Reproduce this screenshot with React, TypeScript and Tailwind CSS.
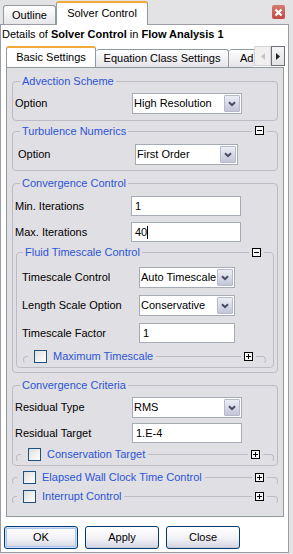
import type { ReactNode } from 'react'

const face = 'bg-[#e0dfe3]'

function PlusMinus({ minus }: { minus?: boolean }) {
  return (
    <span className="relative block w-[9px] h-[9px] border border-black bg-[#f7f7f7]">
      <span className="absolute left-[1px] top-[3px] w-[5px] h-px bg-black" />
      {!minus && <span className="absolute left-[3px] top-[1px] w-px h-[5px] bg-black" />}
    </span>
  )
}

function Checkbox() {
  return (
    <span className="block w-[13px] h-[13px] border border-[#1c5180] bg-gradient-to-br from-[#dcdcd7] via-[#f0f0ee] to-white" />
  )
}

function Chevron() {
  return (
    <svg width="8" height="6" viewBox="0 0 8 6">
      <path d="M1 1.2 L4 4.2 L7 1.2" fill="none" stroke="#4a4a66" strokeWidth="2" />
    </svg>
  )
}

function Select({ value, w }: { value: string; w: string }) {
  return (
    <div className={`flex h-[21px] bg-white border border-[#a5acb5] ${w}`}>
      <span className="flex-1 pl-[1px] leading-[19px] whitespace-nowrap overflow-hidden">{value}</span>
      <span className="w-[16px] m-px flex items-center justify-center border border-[#b8bacb] rounded-[1px] bg-gradient-to-b from-[#eceef6] to-[#c4c6d8]">
        <Chevron />
      </span>
    </div>
  )
}

function Input({ value, w, caret }: { value: string; w: string; caret?: boolean }) {
  return (
    <div className={`flex items-center h-[20px] bg-white border border-[#a5acb5] pl-[3px] ${w}`}>
      <span className="leading-[18px]">{value}</span>
      {caret && <span className="w-px h-[13px] bg-black" />}
    </div>
  )
}

function Row({ label, labelCls, children, className = '' }: { label: string; labelCls: string; children: ReactNode; className?: string }) {
  return (
    <div className={`flex items-center ${className}`}>
      <span className={`shrink-0 whitespace-nowrap ${labelCls}`}>{label}</span>
      {children}
    </div>
  )
}

function Group({
  title,
  titleLeft = 'left-[7px]',
  toggleCls,
  className = '',
  children,
}: {
  title: string
  titleLeft?: string
  toggleCls?: string
  className?: string
  children: ReactNode
}) {
  return (
    <div className={`relative border border-[#bdbcc5] rounded-[4px] ${className}`}>
      <span className={`absolute -top-[7px] ${titleLeft} px-[2px] leading-[13px] text-[#2c55d6] whitespace-nowrap ${face}`}>
        {title}
      </span>
      {toggleCls && (
        <span className={`absolute px-[3px] ${face} ${toggleCls}`}>
          <PlusMinus minus />
        </span>
      )}
      {children}
    </div>
  )
}

function Collapsed({
  title,
  className = '',
  padCls = 'pl-[6px]',
  plusCls = 'right-[10px]',
}: {
  title: string
  className?: string
  padCls?: string
  plusCls?: string
}) {
  return (
    <div className={`relative h-[8px] border border-[#bdbcc5] border-b-transparent rounded-[4px] ${className}`}>
      <div className={`absolute -top-[7px] left-[4px] flex items-center gap-[6px] pr-[3px] ${padCls} ${face}`}>
        <Checkbox />
        <span className="leading-[13px] text-[#2c55d6] whitespace-nowrap">{title}</span>
      </div>
      <span className={`absolute -top-[5px] px-[3px] ${face} ${plusCls}`}>
        <PlusMinus />
      </span>
    </div>
  )
}

function XPButton({ label, focused }: { label: string; focused?: boolean }) {
  return (
    <button
      className={`w-[74px] h-[23px] rounded-[3px] border border-[#003c74] bg-gradient-to-b from-white via-[#f3f3f7] to-[#d4d4e2] text-black leading-[21px] ${
        focused ? 'shadow-[inset_0_0_0_1px_#cfe0fb,inset_0_0_0_2px_#a9c4f0]' : 'shadow-[inset_0_-1px_0_#c8c8d8]'
      }`}
    >
      {label}
    </button>
  )
}

export default function App() {
  return (
    <div className="w-[293px] h-[554px] bg-[#e3e3e6] font-['Liberation_Sans',Arial,sans-serif] text-[11px] text-black overflow-hidden">
      {/* window tabs */}
      <div className="flex items-end h-[24px] pl-[3px]">
        <div className="w-[53px] h-[19px] border border-b-0 border-[#919b9c] rounded-t-[3px] bg-gradient-to-b from-white to-[#e6e6ea] text-center leading-[18px]">
          Outline
        </div>
        <div className="relative z-10 -mb-px w-[92px] h-[24px] border border-b-0 border-[#919b9c] border-t-[2px] border-t-[#f2a93b] rounded-t-[3px] bg-white text-center leading-[20px]">
          Solver Control
        </div>
        <div className="ml-auto self-start mt-[5px] mr-[8px] w-[13px] h-[14px] rounded-[2px] bg-gradient-to-b from-[#d77b72] to-[#bf4a44] flex items-center justify-center">
          <svg width="9" height="9" viewBox="0 0 9 9">
            <path d="M1.5 1.5 L7.5 7.5 M7.5 1.5 L1.5 7.5" stroke="white" strokeWidth="2.2" />
          </svg>
        </div>
      </div>

      {/* details panel */}
      <div className="w-[289px] h-[529px] border border-[#9c9ca6] bg-white flex flex-col">
        <div className="h-[19px] pl-[1px] leading-[19px] whitespace-nowrap">
          Details of <b>Solver Control</b> in <b>Flow Analysis 1</b>
        </div>

        {/* settings tabs */}
        <div className="flex items-end h-[23px] ml-[5px] w-[279px]">
          <div className="flex items-end w-[248px] h-full overflow-hidden">
            <div className="relative z-10 -mb-px shrink-0 w-[90px] h-[22px] border border-b-0 border-[#919b9c] border-t-[2px] border-t-[#f2a93b] rounded-t-[3px] bg-white text-center leading-[18px]">
              Basic Settings
            </div>
            <div className="shrink-0 w-[133px] h-[18px] border border-b-0 border-l-0 border-[#919b9c] rounded-t-[3px] bg-gradient-to-b from-white to-[#e4e4ea] text-center leading-[17px]">
              Equation Class Settings
            </div>
            <div className="shrink-0 w-[40px] h-[18px] border border-b-0 border-l-0 border-[#919b9c] rounded-t-[3px] bg-gradient-to-b from-white to-[#e4e4ea] pl-[11px] leading-[17px] whitespace-nowrap">
              Ad
            </div>
          </div>
          <div className="self-end mb-px w-[17px] h-[20px] border border-[#d6d5d9] bg-[#f1f0ee] flex items-center justify-center">
            <svg width="4" height="7" viewBox="0 0 4 7">
              <path d="M4 0 L0 3.5 L4 7 Z" fill="#c4c3c9" />
            </svg>
          </div>
          <div className="self-end mb-px w-[14px] h-[20px] border border-[#6f6f7a] bg-gradient-to-b from-[#f6f6f8] to-[#e2e2e8] flex items-center justify-center">
            <svg width="4" height="7" viewBox="0 0 4 7">
              <path d="M0 0 L4 3.5 L0 7 Z" fill="#222" />
            </svg>
          </div>
        </div>

        {/* tab page */}
        <div className={`ml-[5px] w-[278px] h-[450px] border border-[#919b9c] ${face} pl-[5px] pr-[5px]`}>
          <Group title="Advection Scheme" className="mt-[13px] pt-[11px] pb-[6px]">
            <Row label="Option" labelCls="w-[119px] pl-[2px]">
              <Select value="High Resolution" w="w-[110px]" />
            </Row>
          </Group>

          <Group title="Turbulence Numerics" toggleCls="-top-[6px] right-[10px]" className="mt-[10px] pt-[12px] pb-[5px]">
            <Row label="Option" labelCls="w-[122px] pl-[5px]">
              <Select value="First Order" w="w-[103px]" />
            </Row>
          </Group>

          <Group title="Convergence Control" className="mt-[12px] pt-[12px] pb-[4px] px-[3px]">
            <Row label="Min. Iterations" labelCls="w-[116px] -ml-px">
              <Input value="1" w="w-[110px]" />
            </Row>
            <Row label="Max. Iterations" labelCls="w-[116px] -ml-px" className="mt-[6px]">
              <Input value="40" w="w-[110px]" caret />
            </Row>

            <Group title="Fluid Timescale Control" titleLeft="left-[6px]" toggleCls="-top-[5px] right-[9px]" className="mt-[10px] pt-[14px] pb-[3px]">
              <Row label="Timescale Control" labelCls="w-[122px] pl-[5px]">
                <Select value="Auto Timescale" w="w-[96px]" />
              </Row>
              <Row label="Length Scale Option" labelCls="w-[122px] pl-[5px]" className="mt-[7px]">
                <Select value="Conservative" w="w-[96px]" />
              </Row>
              <Row label="Timescale Factor" labelCls="w-[122px] pl-[5px]" className="mt-[7px]">
                <Input value="1" w="w-[96px]" />
              </Row>
              <Collapsed title="Maximum Timescale" className="mt-[13px] ml-[6px] mr-[7px]" plusCls="right-[9px]" />
            </Group>
          </Group>

          <Group title="Convergence Criteria" className="mt-[12px] pt-[11px] pb-[3px]">
            <Row label="Residual Type" labelCls="w-[119px] pl-[2px]">
              <Select value="RMS" w="w-[110px]" />
            </Row>
            <Row label="Residual Target" labelCls="w-[119px] pl-[2px]" className="mt-[5px]">
              <Input value="1.E-4" w="w-[110px]" />
            </Row>
            <Collapsed title="Conservation Target" className="mt-[11px] mx-[3px]" padCls="pl-[7px]" plusCls="right-[10px]" />
          </Group>

          <Collapsed title="Elapsed Wall Clock Time Control" className="mt-[11px]" />
          <Collapsed title="Interrupt Control" className="mt-[11px]" />
        </div>

        {/* dialog buttons */}
        <div className="flex gap-[7px] pl-[3px] pt-[9px]">
          <XPButton label="OK" focused />
          <XPButton label="Apply" />
          <XPButton label="Close" />
        </div>
      </div>
    </div>
  )
}
